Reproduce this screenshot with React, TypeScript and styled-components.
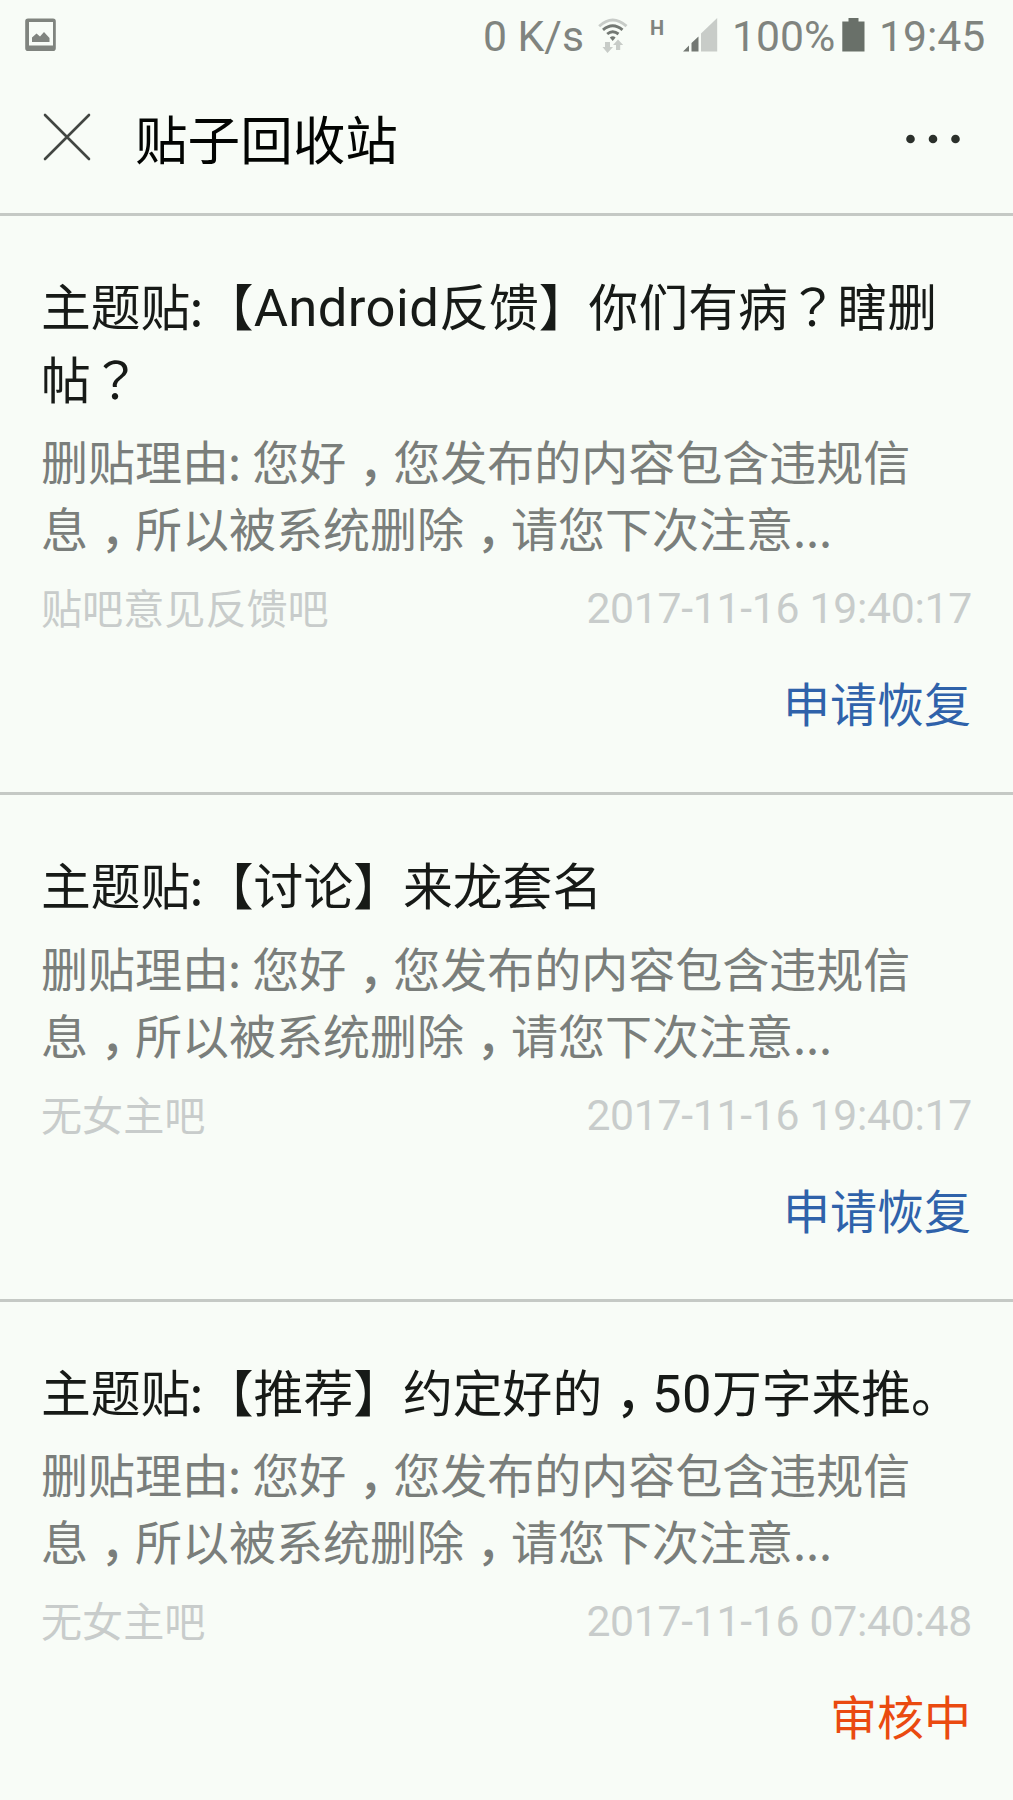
import React from "react";
import styled, { createGlobalStyle } from "styled-components";

const GlobalStyle = createGlobalStyle`
  * { box-sizing: border-box; }
  body {
    margin: 0;
    background: #f8fcf7;
    font-family: Roboto, "Noto Sans CJK SC", sans-serif;
  }
`;

const Screen = styled.main`
  width: 1013px;
  height: 1800px;
  overflow: hidden;
  background: #f8fcf7;
`;

const StatusBar = styled.div`
  display: flex;
  align-items: center;
  justify-content: space-between;
  height: 70px;
  padding: 0 29px 0 25px;
  color: #80847f;
  font-size: 42.7px;
  line-height: 70px;
  white-space: nowrap;
  svg { display: block; flex: none; }
`;

const StatusGroup = styled.div`
  display: flex;
  align-items: center;
`;

const StatusText = styled.span<{ $width: number }>`
  width: ${(p) => p.$width}px;
  padding-top: 1px;
`;

const NetworkType = styled.span`
  width: 33px;
  height: 34px;
  font-size: 20px;
  line-height: 20px;
  font-weight: 700;
`;

const Header = styled.header`
  display: flex;
  align-items: center;
  height: 146px;
  padding: 0 52px 10px 43px;
  border-bottom: 3px solid #c5c9c5;
  svg { display: block; flex: none; }
`;

const PageTitle = styled.h1`
  flex: 1;
  margin: 0 0 0 44px;
  color: #020402;
  font: 400 52.6px/72px "Noto Sans CJK SC", sans-serif;
`;

const Card = styled.article`
  padding: 52px 42px 55px 41px;
  border-bottom: 3px solid #c5c9c5;
`;

const CardTitle = styled.h2`
  margin: 0;
  color: #171a17;
  font: 400 49.8px/72.6px "Noto Sans CJK SC", sans-serif;
  white-space: pre-line;
`;

const Reason = styled.p`
  margin: 13px 0 0;
  color: #7a7e7b;
  font: 400 47px/67px "Noto Sans CJK SC", sans-serif;
  white-space: pre-line;
`;

const Meta = styled.div`
  display: flex;
  align-items: flex-start;
  justify-content: space-between;
  height: 60px;
  margin-top: 16px;
  color: #c8cccb;
`;

const Forum = styled.span`
  font: 400 41.1px/60px "Noto Sans CJK SC", sans-serif;
`;

const Timestamp = styled.time`
  margin: 2px -1px 0 0;
  font: 400 42.7px/60px Roboto, sans-serif;
  letter-spacing: -0.27px;
`;

const Action = styled.div<{ $pending?: boolean }>`
  margin-top: 31px;
  color: ${(p) => (p.$pending ? "#ea4a10" : "#2f62aa")};
  font: 400 47px/70px "Noto Sans CJK SC", sans-serif;
  text-align: right;
`;

const Latin = styled.span`
  font-family: Roboto, sans-serif;
  font-size: 52.6px;
  letter-spacing: 0.4px;
  line-height: 0;
`;

const Colon = styled.span`
  margin: 0 0.6px 0 -1px;
`;

const Comma = styled.span`
  padding: 0 0.24em 0 0.26em;
  font-weight: 500;
  font-feature-settings: "halt";
`;

const Question = styled.span`
  font-family: "Noto Sans CJK JP", sans-serif;
`;

function punctuate(text: string) {
  return text.split(/(，|？|:|[A-Za-z0-9]+)/).map((part, i) => {
    if (part === "，") return <Comma key={i}>{part}</Comma>;
    if (part === "？") return <Question key={i}>{part}</Question>;
    if (part === ":") return <Colon key={i}>{part}</Colon>;
    if (/^[A-Za-z0-9]+$/.test(part)) return <Latin key={i}>{part}</Latin>;
    return part;
  });
}

const REASON = "删贴理由: 您好，您发布的内容包含违规信\n息，所以被系统删除，请您下次注意...";

const posts = [
  { title: "主题贴:【Android反馈】你们有病？瞎删\n帖？", forum: "贴吧意见反馈吧", time: "2017-11-16 19:40:17", action: "申请恢复", pending: false },
  { title: "主题贴:【讨论】来龙套名", forum: "无女主吧", time: "2017-11-16 19:40:17", action: "申请恢复", pending: false },
  { title: "主题贴:【推荐】约定好的，50万字来推。", forum: "无女主吧", time: "2017-11-16 07:40:48", action: "审核中", pending: true },
];

const PictureIcon = () => (
  <svg width="31" height="34" viewBox="0 0 31 34">
    <path fill="#80847f" fillRule="evenodd" d="M3 0.500h25a2.800 2.800 0 0 1 2.800 2.800v27a2.800 2.800 0 0 1-2.800 2.800H3a2.800 2.800 0 0 1-2.800-2.800v-27A2.800 2.800 0 0 1 3 .500ZM4 4v23.500h24V4Z" />
    <path fill="#80847f" d="M7 24v-4.500l4.500-4 3.500 3 4-4.500 5.500 6v4Z" />
  </svg>
);

const WifiIcon = () => (
  <svg width="30" height="35" viewBox="0 0 30 35">
    <g fill="none" strokeWidth="2.900">
      <path d="M1.200 8.200Q14.700-4.200 28.500 8.200" stroke="#c8ccc8" />
      <path d="M5 11.800Q14.700 3.500 24.500 11.800M9.200 16Q14.700 11.500 20.500 16" stroke="#737873" />
    </g>
    <path fill="#737873" d="M11.800 19.500q3-2.300 5.800 0L14.700 23Z" />
    <path fill="#c8ccc8" d="M7 24h5v5h3l-5.500 6L4.500 29H7ZM18 32v-5h-3l5-5.500 5.200 5.500h-3v5Z" />
  </svg>
);

const SignalIcon = () => (
  <svg width="35" height="34" viewBox="0 0 35 34">
    <path fill="#737873" d="M0 33.500 6 27.500v6ZM8.500 25l7-6.500v15h-7Z" />
    <path fill="#c8ccc8" d="M18 15.500 34.200 0v33.500H18Z" />
  </svg>
);

const BatteryIcon = () => (
  <svg width="23" height="34" viewBox="0 0 23 34">
    <path fill="#697069" d="M6.500 0h10v3.500h6V33.500H.3v-30h6.200Z" />
  </svg>
);

const CloseIcon = () => (
  <svg width="48" height="48" viewBox="0 0 48 48">
    <path d="M2 2 46 46M46 2 2 46" stroke="#424642" strokeWidth="2.600" strokeLinecap="round" />
  </svg>
);

const MoreIcon = () => (
  <svg width="56" height="16" viewBox="0 0 56 16">
    <g fill="#2b302b">
      <circle cx="5.500" cy="10" r="4.300" />
      <circle cx="28" cy="10" r="4.300" />
      <circle cx="50.500" cy="10" r="4.300" />
    </g>
  </svg>
);

export default function App() {
  return (
    <Screen>
      <GlobalStyle />
      <StatusBar>
        <PictureIcon />
        <StatusGroup>
          <StatusText $width={115}>0 K/s</StatusText>
          <WifiIcon />
          <StatusText $width={22} />
          <NetworkType>H</NetworkType>
          <SignalIcon />
          <StatusText $width={14} />
          <StatusText $width={110}>100%</StatusText>
          <BatteryIcon />
          <StatusText $width={14} />
          <StatusText $width={105}>19:45</StatusText>
        </StatusGroup>
      </StatusBar>
      <Header>
        <CloseIcon />
        <PageTitle>贴子回收站</PageTitle>
        <MoreIcon />
      </Header>
      {posts.map((post, i) => (
        <Card key={i}>
          <CardTitle>{punctuate(post.title)}</CardTitle>
          <Reason>{punctuate(REASON)}</Reason>
          <Meta>
            <Forum>{post.forum}</Forum>
            <Timestamp>{post.time}</Timestamp>
          </Meta>
          <Action $pending={post.pending}>{post.action}</Action>
        </Card>
      ))}
    </Screen>
  );
}
